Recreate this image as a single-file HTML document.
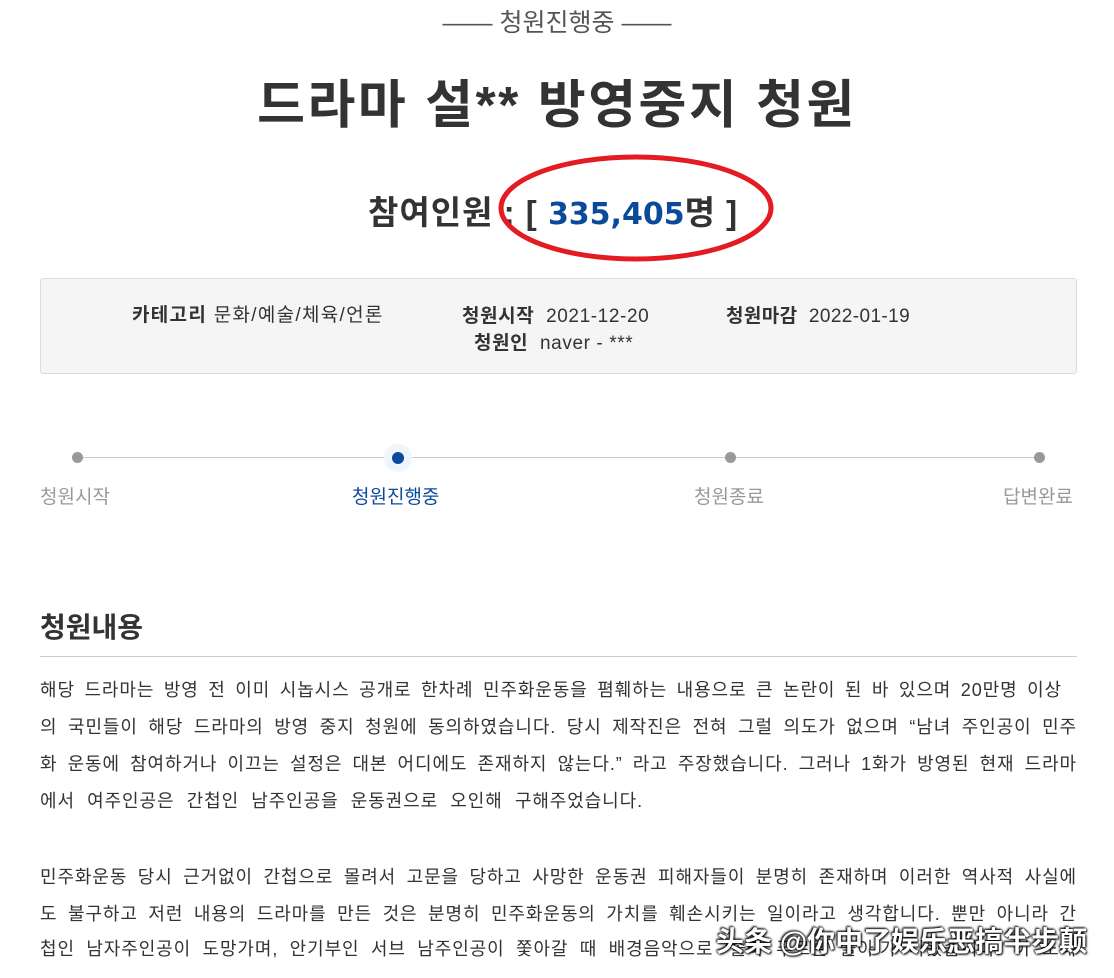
<!DOCTYPE html>
<html><head><meta charset="utf-8"><style>
body{margin:0;width:1114px;height:978px;overflow:hidden;background:#fff;font-family:"Liberation Sans","Noto Sans CJK KR",sans-serif;color:#333;position:relative}
.a{position:absolute;white-space:nowrap}
.l{position:absolute;left:40px;font-size:18px;line-height:24px;color:#333;text-align:justify;text-align-last:justify;white-space:nowrap;letter-spacing:0.9px}
</style></head><body>
<div class="a" style="left:0;width:1114px;top:3px;text-align:center;font-size:25px;color:#555">—— 청원진행중 ——</div>
<div class="a" style="left:0;width:1114px;top:63px;text-align:center;font-size:52px;font-weight:bold;color:#333;letter-spacing:2.5px">드라마 설** 방영중지 청원</div>
<div class="a" style="left:368px;top:186px;font-size:33px;font-weight:bold;color:#333;letter-spacing:1px">참여인원 : [ <span style="color:#0b4a9a;font-family:'DejaVu Sans',sans-serif;letter-spacing:0;font-size:30px">335,405</span>명 ]</div>
<svg class="a" style="left:498px;top:152px" width="282" height="112"><ellipse cx="138" cy="56" rx="135" ry="51" fill="none" stroke="#e31b23" stroke-width="5"/></svg>
<div class="a" style="left:40px;top:278px;width:1035px;height:94px;background:#f5f5f5;border:1px solid #ddd;border-radius:3px"></div>
<div class="a" style="left:132px;top:300px;font-size:19px;letter-spacing:1.3px"><b>카테고리</b> 문화/예술/체육/언론</div>
<div class="a" style="left:462px;top:301px;font-size:19px;letter-spacing:0.6px"><b>청원시작</b>&nbsp; 2021-12-20</div>
<div class="a" style="left:474px;top:328px;font-size:19px;letter-spacing:0.6px"><b>청원인</b>&nbsp; naver - ***</div>
<div class="a" style="left:726px;top:301px;font-size:19px;letter-spacing:0.4px"><b>청원마감</b>&nbsp; 2022-01-19</div>
<div class="a" style="left:77px;top:457px;width:962px;height:1px;background:#ccc"></div>
<div class="a" style="left:72px;top:452px;width:11px;height:11px;border-radius:50%;background:#999"></div>
<div class="a" style="left:384px;top:444px;width:28px;height:28px;border-radius:50%;background:#eef5fd"></div>
<div class="a" style="left:392px;top:452px;width:12px;height:12px;border-radius:50%;background:#0b4a9a"></div>
<div class="a" style="left:725px;top:452px;width:11px;height:11px;border-radius:50%;background:#999"></div>
<div class="a" style="left:1034px;top:452px;width:11px;height:11px;border-radius:50%;background:#999"></div>
<div class="a" style="left:40px;top:482px;font-size:19px;color:#999">청원시작</div>
<div class="a" style="left:352px;top:482px;font-size:19px;color:#0b4a9a">청원진행중</div>
<div class="a" style="left:694px;top:482px;font-size:19px;color:#999">청원종료</div>
<div class="a" style="left:1003px;top:482px;font-size:19px;color:#999">답변완료</div>
<div class="a" style="left:40px;top:606px;font-size:28px;font-weight:bold;color:#333">청원내용</div>
<div class="a" style="left:40px;top:656px;width:1037px;height:1px;background:#ccc"></div>
<div class="l" style="top:678px;width:1022px">해당 드라마는 방영 전 이미 시놉시스 공개로 한차례 민주화운동을 폄훼하는 내용으로 큰 논란이 된 바 있으며 20만명 이상</div>
<div class="l" style="top:715px;width:1037px">의 국민들이 해당 드라마의 방영 중지 청원에 동의하였습니다. 당시 제작진은 전혀 그럴 의도가 없으며 “남녀 주인공이 민주</div>
<div class="l" style="top:752px;width:1037px">화 운동에 참여하거나 이끄는 설정은 대본 어디에도 존재하지 않는다.” 라고 주장했습니다. 그러나 1화가 방영된 현재 드라마</div>
<div class="l" style="top:789px;width:603px">에서 여주인공은 간첩인 남주인공을 운동권으로 오인해 구해주었습니다.</div>
<div class="l" style="top:865px;width:1037px">민주화운동 당시 근거없이 간첩으로 몰려서 고문을 당하고 사망한 운동권 피해자들이 분명히 존재하며 이러한 역사적 사실에</div>
<div class="l" style="top:902px;width:1037px">도 불구하고 저런 내용의 드라마를 만든 것은 분명히 민주화운동의 가치를 훼손시키는 일이라고 생각합니다. 뿐만 아니라 간</div>
<div class="l" style="top:937px;width:1037px">첩인 남자주인공이 도망가며, 안기부인 서브 남주인공이 쫓아갈 때 배경음악으로 ‘솔아 푸르른 솔아’가 나왔습니다. 이 노래</div>
<div class="a" style="left:716px;top:920px;font-size:28px;color:#fff;font-weight:bold;text-shadow:0 0 2px #000,1px 1px 2px #000,-1px -1px 2px #000">头条 @你中了娱乐恶搞半步颠</div>
</body></html>
